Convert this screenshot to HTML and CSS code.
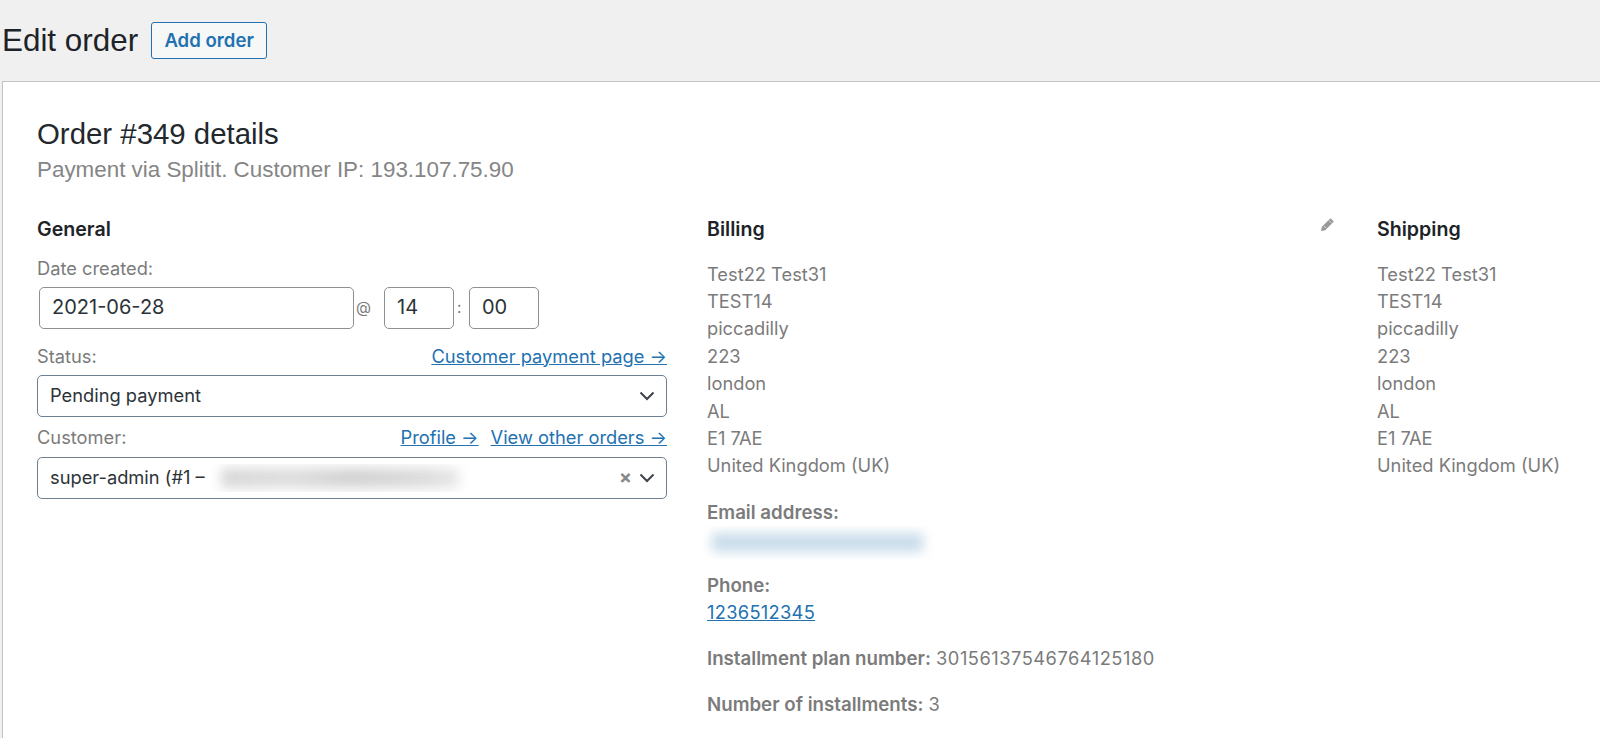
FILE: index.html
```html
<!DOCTYPE html>
<html lang="en">
<head>
<meta charset="utf-8">
<title>Edit order</title>
<link rel="stylesheet" href="styles.css">
</head>
<body>
<header class="page-head">
  <h1 class="page-title">Edit order</h1>
  <a class="add-btn" href="#">Add order</a>
</header>
<main class="panel">
  <h2 class="order-title">Order #349 details</h2>
  <p class="order-meta">Payment via Splitit. Customer IP: 193.107.75.90</p>
  <div class="columns">
    <section class="col">
      <h3 class="col-title">General</h3>
      <div class="label-row date-label"><span>Date created:</span></div>
      <div class="date-row">
        <div class="field date-field">2021-06-28</div>
        <span class="sep at">@</span>
        <div class="field time-field">14</div>
        <span class="sep colon">:</span>
        <div class="field time-field">00</div>
      </div>
      <div class="label-row status-label"><span>Status:</span><a href="#">Customer payment page →</a></div>
      <div class="field select">
        <span class="select-text">Pending payment</span>
        <svg class="chevron" viewBox="0 0 16 10" width="16" height="10"><path d="M1.5 1.5 8 8l6.5-6.5" fill="none" stroke="#3c434a" stroke-width="2"/></svg>
      </div>
      <div class="label-row"><span>Customer:</span><span class="links"><a href="#">Profile →</a><a href="#">View other orders →</a></span></div>
      <div class="field select">
        <span class="select-text">super-admin (#1 –</span>
        <span class="redact redact-grey"><i></i></span>
        <span class="clear">×</span>
        <svg class="chevron chevron-near" viewBox="0 0 16 10" width="16" height="10"><path d="M1.5 1.5 8 8l6.5-6.5" fill="none" stroke="#3c434a" stroke-width="2"/></svg>
      </div>
    </section>
    <section class="col">
      <div class="title-row">
        <h3 class="col-title">Billing</h3>
        <svg class="pencil" viewBox="0 0 16 16" width="15" height="15"><path d="M11.2 1.200 14.800 4.800 5.600 14 1 15l1-4.600z" fill="#999"/><path d="M9.800 3.800l2.400 2.400M4 9.500l2.500 2.500" stroke="#fff" stroke-width=".7" fill="none"/></svg>
      </div>
      <address class="addr">Test22 Test31<br>TEST14<br>piccadilly<br>223<br>london<br>AL<br>E1 7AE<br>United Kingdom (UK)</address>
      <div class="info"><strong class="info-head">Email address:</strong><span class="redact redact-blue"><i></i></span></div>
      <p class="info phone"><strong class="info-head">Phone:</strong><a class="phone-num" href="#">1236512345</a></p>
      <p class="info plan"><strong>Installment plan number:</strong> <span class="plan-num">30156137546764125180</span></p>
      <p class="info plan plan-last"><strong>Number of installments:</strong> 3</p>
    </section>
    <section class="col">
      <h3 class="col-title">Shipping</h3>
      <address class="addr">Test22 Test31<br>TEST14<br>piccadilly<br>223<br>london<br>AL<br>E1 7AE<br>United Kingdom (UK)</address>
    </section>
  </div>
</main>
</body>
</html>
```
FILE: styles.css
```css
* { box-sizing: border-box; }
html, body { margin: 0; height: 738px; overflow: hidden; }
body {
  background: #f0f0f1;
  font-family: "Inter", "Liberation Sans", sans-serif;
  font-size: 18.3px;
  line-height: 27.4px;
  color: #7b7b7b;
}
a { color: #2271b1; text-decoration: underline; }
.phone-num { letter-spacing: 0.3px; }
.plan-num { letter-spacing: 0.5px; }
.page-head {
  height: 81px;
  padding: 22px 0 0 2px;
  display: flex;
  align-items: flex-start;
  gap: 13px;
}
.page-title {
  margin: 0;
  font: 400 31.4px/37px "Liberation Sans", sans-serif;
  color: #1d2327;
}
.add-btn {
  width: 116px;
  height: 37px;
  display: flex;
  align-items: center;
  justify-content: center;
  border: 1px solid #2271b1;
  border-radius: 3px;
  background: #f6f7f7;
  color: #2271b1;
  font-size: 18.6px;
  font-weight: 600;
  text-decoration: none;
}
.panel {
  margin-left: 2px;
  height: 700px;
  background: #fff;
  border-top: 1px solid #c3c4c7;
  border-left: 1px solid #c3c4c7;
  padding: 33px 0 0 34px;
}
.order-title {
  margin: 0;
  font: 400 29.4px/38px "Liberation Sans", sans-serif;
  color: #23282c;
}
.order-meta {
  margin: 3px 0 0;
  font: 400 22.4px/28px "Liberation Sans", sans-serif;
  color: #858585;
}
.columns {
  display: grid;
  grid-template-columns: 630px 630px 1fr;
  column-gap: 40px;
  margin-top: 32px;
}
.col-title {
  margin: 0;
  font-size: 19.6px;
  line-height: 27px;
  font-weight: 600;
  color: #1d2327;
}
.title-row {
  display: flex;
  justify-content: space-between;
  align-items: flex-start;
}
.pencil { margin: 1px 2px 0 0; }
.label-row {
  display: flex;
  justify-content: space-between;
  height: 27px;
  margin-top: 7.5px;
  margin-bottom: 5.500px;
  line-height: 27px;
}
.date-label { margin-top: 12px; margin-bottom: 4.500px; }
.status-label { margin-top: 14px; margin-bottom: 5px; }
.links { display: flex; gap: 12px; }
.date-row {
  display: flex;
  align-items: center;
  padding-left: 2px;
  height: 42px;
}
.field {
  height: 42px;
  border: 1px solid #8c8f94;
  border-radius: 5px;
  background: #fff;
  color: #2c3338;
  font-size: 18.3px;
  display: flex;
  align-items: center;
  padding-left: 12px;
}
.date-field { width: 315px; font-size: 20px; }
.time-field { width: 70px; font-size: 20px; }
.sep { color: #7b7b7b; font-size: 15.5px; }
.at { width: 30px; padding-left: 2px; }
.colon { width: 15px; padding-left: 3px; }
.select { border-color: #6e7f90; }
.select-text { white-space: nowrap; }
.chevron { margin-left: auto; margin-right: 11px; flex: none; }
.chevron-near { margin-left: 7px; }
.clear {
  margin-left: auto;
  color: #888;
  font-size: 19px;
  font-weight: 700;
  line-height: 1;
}
.redact {
  display: block;
  overflow: hidden;
  background: #fff;
}
.redact i { display: block; height: 100%; }
.redact-grey {
  width: 258px;
  height: 28px;
  margin-left: 6px;
  padding: 4px 10px;
}
.redact-grey i {
  background: linear-gradient(90deg, #d8d8d8, #dedede 30%, #d2d2d2 55%, #dcdcdc 85%, #e8e8e8);
  filter: blur(6px);
}
.redact-blue {
  width: 234px;
  height: 33px;
  margin-left: -4px;
  padding: 7px 14px 7px 9px;
}
.redact-blue i { background: #c9dcea; filter: blur(6px); }
.addr {
  margin: 17.500px 0 0;
  font-style: normal;
}
.info { margin: 19px 0 0; }
.info strong { font-weight: 600; font-size: 18.7px; }
.info-head { display: block; }
.phone { margin-top: 12.600px; }
.plan { margin-top: 18px; }
.plan-last { margin-top: 19px; }
```
